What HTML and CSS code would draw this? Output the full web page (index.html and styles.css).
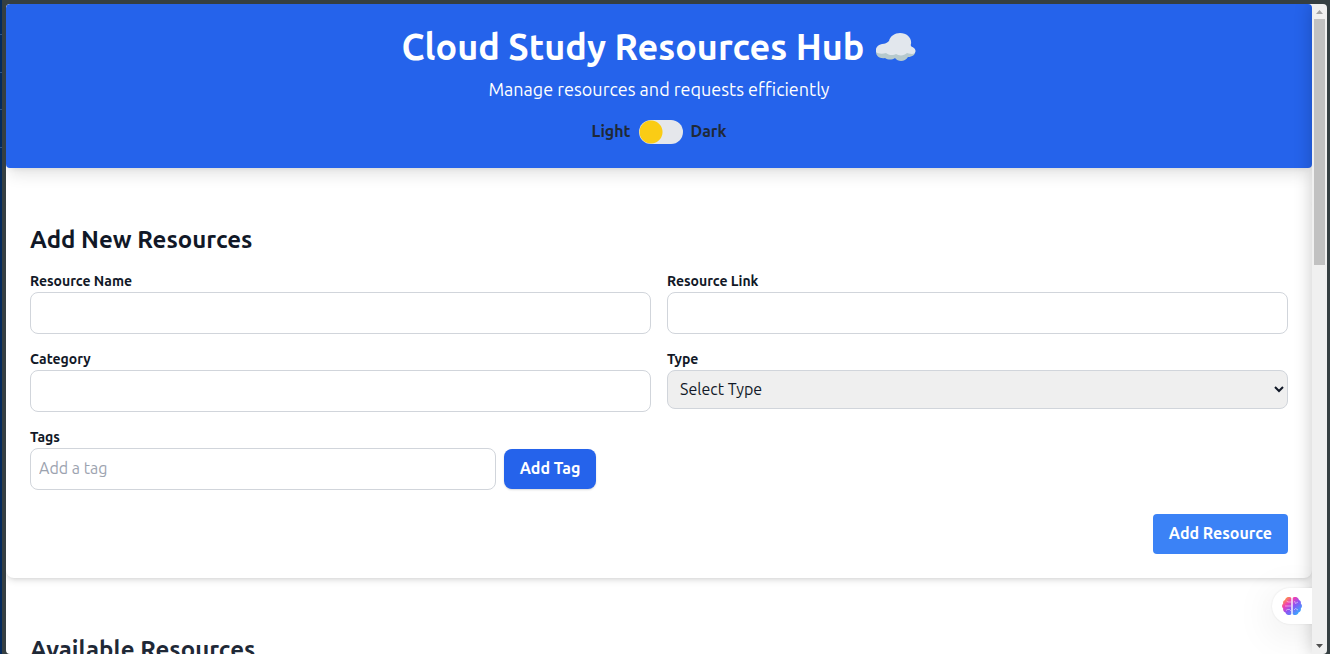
FILE: index.html
```html
<!DOCTYPE html>
<html lang="en">
<head>
<meta charset="utf-8">
<meta name="viewport" content="width=device-width, initial-scale=1">
<title>Cloud Study Resources Hub</title>
<link rel="stylesheet" href="styles.css">
</head>
<body>
<div class="window">
  <div class="edge" aria-hidden="true"></div>
  <div class="viewport">
    <div class="page">
      <header class="hero">
        <h1 class="hero-title">Cloud Study Resources Hub
          <svg class="cloud" viewBox="0 0 40 28" role="img" aria-label="cloud">
            <path fill="#b6c9cd" d="M0 19C0 23 4 26 9 25c3 2 7 2 10 0 3 4 10 4 13-1 5 0 8-3 7-7L36 14 4 15z"/>
            <path fill="#e2e7ed" d="M0 19c-1-3 1-7 6-8 3 0 5-1 7-3C14 3 19 0 24 0c7 0 12 5 11 11-1 2 1 3 3 4 3 3 1 6-2 6-3 0-4-1-5-1-3 3-8 3-11 1-3 2-8 1-10-1-3 1-8 1-10-1z"/>
          </svg>
        </h1>
        <p class="hero-text">Manage resources and requests efficiently</p>
        <label class="theme">
          <span>Light</span>
          <input class="switch" type="checkbox" role="switch" aria-label="Dark theme">
          <span>Dark</span>
        </label>
      </header>
      <main class="sections">
        <section class="card">
          <h2 class="card-title">Add New Resources</h2>
          <form>
            <div class="fields">
              <div class="field">
                <label for="name">Resource Name</label>
                <input class="control" id="name" type="text">
              </div>
              <div class="field">
                <label for="link">Resource Link</label>
                <input class="control" id="link" type="text">
              </div>
              <div class="field">
                <label for="category">Category</label>
                <input class="control" id="category" type="text">
              </div>
              <div class="field">
                <label for="type">Type</label>
                <select class="control select" id="type"><option>Select Type</option></select>
              </div>
              <div class="field">
                <label for="tag">Tags</label>
                <div class="tag-row">
                  <input class="control tag-input" id="tag" type="text" placeholder="Add a tag">
                  <button class="button button-tag" type="button">Add Tag</button>
                </div>
              </div>
            </div>
            <div class="actions">
              <button class="button button-submit" type="submit">Add Resource</button>
            </div>
          </form>
        </section>
        <section class="card">
          <h2 class="card-title card-title-soft">Available Resources</h2>
        </section>
      </main>
    </div>
    <div class="side-panel"></div>
    <button class="assistant" type="button" aria-label="Open assistant">
      <svg class="brain" viewBox="0 0 20 18" aria-hidden="true">
        <defs>
          <linearGradient id="brain-fill" gradientUnits="userSpaceOnUse" x1="3" y1="1" x2="17" y2="17">
            <stop offset="0" stop-color="#ff9a3c"/>
            <stop offset=".28" stop-color="#f03fb4"/>
            <stop offset=".55" stop-color="#8b55f4"/>
            <stop offset="1" stop-color="#2fb0ff"/>
          </linearGradient>
        </defs>
        <path fill="url(#brain-fill)" d="M9.300 1v16C8 19 4 18 3.500 15.500 1.500 15 .8 13 1.200 11.500-.4 10-.4 8 1.200 6.500.8 5 1.500 3.500 3 3 4-.5 8-.8 9.300 1zM10.700 1v16c1.300 2 5.300 1 5.800-1.500 2-.5 2.700-2.500 2.300-4 1.600-1.500 1.600-3.500 0-5 .4-1.500-.3-3-1.800-3.500-1-3.500-5-3.800-6.300-2z"/>
        <path fill="none" stroke="#fff" stroke-width=".8" opacity=".6" d="M9 5H6L4.500 4M3 9h6M4 13.500 5.500 12.500h2L9 14M12.500 4l1 2.500L16 5M12 13l1.500-1.500L16 13"/>
      </svg>
    </button>
  </div>
  <div class="scrollbar" aria-hidden="true">
    <svg class="arrow" viewBox="0 0 15 15"><path fill="#a3a3a3" d="M4 10h7L7.500 6z"/></svg>
    <div class="track"><div class="thumb"></div></div>
    <svg class="arrow" viewBox="0 0 15 15"><path fill="#505050" d="M4 5h7L7.500 9z"/></svg>
  </div>
</div>
</body>
</html>
```
FILE: styles.css
```css
* {
  box-sizing: border-box;
  margin: 0;
}

body {
  height: 100vh;
  overflow: hidden;
  background: #353f42;
  color: #111827;
  font: 400 16px/24px Ubuntu, "Open Sans", sans-serif;
}

.window {
  display: flex;
  height: 100vh;
  padding: 4px 3px 0 0;
}

.edge {
  width: 2px;
  margin: -4px 4px 0 0;
  background:
    linear-gradient(#2f5689, #2f5689) 0 34px / 2px 1px no-repeat,
    linear-gradient(#2f5689, #2f5689) 0 72px / 2px 1px no-repeat,
    linear-gradient(#2f5689, #2f5689) 0 109px / 2px 1px no-repeat,
    linear-gradient(#2f5689, #2f5689) 0 147px / 2px 1px no-repeat,
    #042a5c;
}

.viewport {
  position: relative;
  flex: 1;
  min-width: 0;
  overflow: hidden;
  border-radius: 4px 0 0 4px;
  background: #fff;
}

.hero {
  display: flex;
  flex-direction: column;
  align-items: center;
  padding: 24px;
  border-radius: 4px;
  background: #2563eb;
  color: #fff;
  box-shadow: 0 10px 15px -3px rgb(0 0 0 / 10%), 0 4px 6px -4px rgb(0 0 0 / 10%);
}

.hero-title {
  display: flex;
  align-items: center;
  gap: 12px;
  font-size: 36px;
  line-height: 38px;
  font-weight: 600;
}

.cloud {
  width: 40px;
  height: 28px;
}

.hero-text {
  margin-top: 10px;
  font-size: 18px;
  line-height: 26px;
}

.theme {
  display: flex;
  align-items: center;
  gap: 8px;
  margin-top: 18px;
  color: #1f2937;
  font-weight: 600;
}

.theme span {
  padding-bottom: 2px;
  line-height: 22px;
}

.switch {
  appearance: none;
  width: 44px;
  height: 24px;
  border-radius: 12px;
  background: radial-gradient(circle at 12px 12px, #facc15 11px, #e5e7eb 12px);
}

.sections {
  display: grid;
  gap: 32px;
  padding-top: 32px;
}

.card {
  padding: 24px;
  border-radius: 8px;
  box-shadow: 0 4px 6px -1px rgb(0 0 0 / 10%), 0 2px 4px -2px rgb(0 0 0 / 10%);
  clip-path: inset(0 0 -12px 0);
}

.card-title {
  margin-bottom: 16px;
  font-size: 24px;
  line-height: 32px;
  font-weight: 600;
}

.card-title-soft {
  color: #1f2937;
}

.fields {
  display: grid;
  grid-template-columns: 1fr 1fr;
  gap: 16px;
}

.field label {
  display: block;
  padding-bottom: 2px;
  font-size: 14px;
  line-height: 18px;
  font-weight: 600;
}

.control {
  display: block;
  width: 100%;
  height: 42px;
  padding: 7px 8px 9px;
  border: 1px solid #d1d5db;
  border-radius: 8px;
  background: #fff;
  color: #111827;
  font: inherit;
}

.control::placeholder {
  color: #9ca3af;
}

.select {
  height: 39px;
  background: #efefef;
}

.tag-row {
  display: flex;
  align-items: center;
  gap: 8px;
}

.tag-input {
  width: 75%;
}

.button {
  height: 40px;
  padding: 0 16px 2px;
  border: 0;
  color: #fff;
  font: inherit;
  font-weight: 600;
  white-space: nowrap;
}

.button-tag {
  border-radius: 8px;
  background: #2563eb;
  box-shadow: 0 1px 2px rgb(0 0 0 / 15%);
}

.button-submit {
  border-radius: 4px;
  background: #3b82f6;
}

.actions {
  display: flex;
  justify-content: flex-end;
  margin-top: 24px;
}

.side-panel {
  position: absolute;
  top: 0;
  bottom: 0;
  left: 100%;
  width: 40px;
  box-shadow: 0 0 18px rgb(0 0 0 / 22%);
}

.assistant {
  position: absolute;
  right: 0;
  bottom: 30px;
  display: flex;
  align-items: center;
  width: 40px;
  height: 36px;
  padding: 0 10px;
  border: 0;
  border-radius: 18px 0 0 18px;
  background: #fff;
  box-shadow: 0 8px 40px rgb(0 0 0 / 10%), 0 0 2px rgb(0 0 0 / 10%);
}

.brain {
  width: 20px;
  height: 18px;
}

.scrollbar {
  display: flex;
  flex-direction: column;
  width: 15px;
  border-radius: 0 4px 4px 0;
  background: #f0f0f0;
}

.arrow {
  width: 15px;
  height: 15px;
}

.track {
  flex: 1;
  padding: 0 2px;
}

.thumb {
  height: 246px;
  background: #c1c1c1;
}
```
